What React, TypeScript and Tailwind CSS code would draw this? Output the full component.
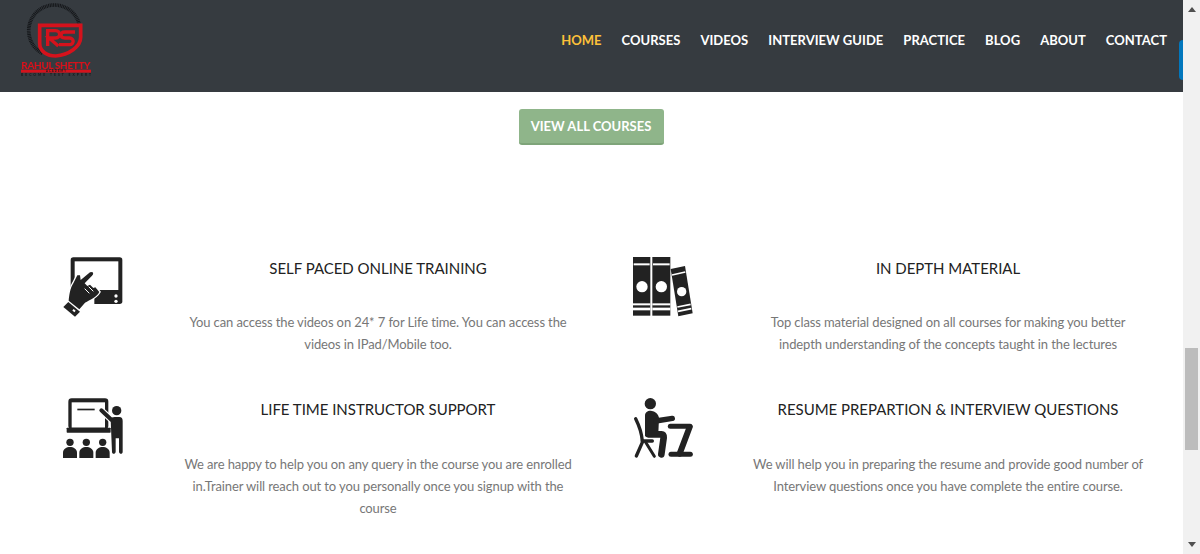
import React from "react";

const navItems = ["HOME", "COURSES", "VIDEOS", "INTERVIEW GUIDE", "PRACTICE", "BLOG", "ABOUT", "CONTACT"];

const Logo = () => (
  <svg width="76" height="80" viewBox="60 0 228 240" className="blur-[0.4px] self-start">
    <path d="M130 160 A77 77 0 1 1 240 70" fill="none" stroke="#15171a" strokeWidth="11" strokeDasharray="3 2" />
    <path
      d="M122 76 H245 V112 C245 140 210 165 170 168 C145 168 122 155 122 130 Z"
      fill="#363b40"
      stroke="#d5121c"
      strokeWidth="11"
    />
    <path d="M146 138 V92 H170 C186 92 186 114 170 114 H150 L178 138" fill="none" stroke="#d5121c" strokeWidth="10" />
    <path d="M228 96 H198 C182 96 182 114 198 114 H212 C226 114 226 134 212 134 H180" fill="none" stroke="#d5121c" strokeWidth="10" />
    <text x="171" y="208" textAnchor="middle" fontFamily="Lato, sans-serif" fontWeight="900" fontSize="30" fill="#d5121c" textLength="208">RAHUL SHETTY</text>
    <rect x="66" y="209" width="210" height="9" fill="#d5121c" />
    <text x="171" y="217" textAnchor="middle" fontFamily="Lato, sans-serif" fontWeight="700" fontSize="8" fill="#15171a" textLength="60">ACADEMY</text>
    <text x="171" y="228" textAnchor="middle" fontFamily="Lato, sans-serif" fontWeight="700" fontSize="10" fill="#15171a" textLength="210">BECOME TEST EXPERT</text>
  </svg>
);

const TouchIcon = () => (
  <svg width="70" height="70" viewBox="60 45 210 210">
    <rect x="92" y="52" width="155" height="140" rx="8" fill="#222" />
    <rect x="104" y="64" width="131" height="86" fill="#fff" />
    <rect x="85" y="150" width="78" height="50" fill="#fff" />
    <circle cx="228" cy="168" r="5" fill="#fff" />
    <circle cx="228" cy="184" r="5" fill="#fff" />
    <path
      d="M157 96 C161 100 160 104 156 107 L134 130 L142 138 L150 134 L160 144 L166 142 L178 156 C170 172 150 180 135 188 L118 208 L86 182 C88 165 90 145 100 130 L112 106 L120 106 L122 120 L150 97 Z"
      fill="#222"
      stroke="#fff"
      strokeWidth="8"
      paintOrder="stroke"
    />
    <path d="M134 146 L148 160 M146 140 L160 154" stroke="#fff" strokeWidth="3" />
    <path d="M70 201 L85 186 L120 215 L105 230 Z" fill="#222" />
    <rect x="98" y="209" width="8" height="6" fill="#fff" transform="rotate(40 102 212)" />
  </svg>
);

const BooksIcon = () => (
  <svg width="70" height="70" viewBox="45 30 210 210">
    <rect x="54" y="36" width="52" height="176" fill="#222" />
    <rect x="112" y="36" width="54" height="176" fill="#222" />
    <g fill="#fff">
      <rect x="56" y="55" width="48" height="6" />
      <rect x="114" y="55" width="50" height="6" />
      <rect x="54" y="175" width="52" height="6" />
      <rect x="54" y="188" width="52" height="8" />
      <rect x="112" y="175" width="54" height="6" />
      <rect x="112" y="188" width="54" height="8" />
      <circle cx="81" cy="125" r="17" />
      <circle cx="139" cy="125" r="17" />
    </g>
    <path d="M167 72 L210 63 L233 205 L190 214 Z" fill="#222" />
    <g stroke="#fff" strokeWidth="5">
      <path d="M171 90 L211 81" />
      <path d="M187 186 L227 178" />
      <path d="M189 199 L229 191" />
    </g>
    <circle cx="200" cy="140" r="14" fill="#fff" />
  </svg>
);

const TeacherIcon = () => (
  <svg width="70" height="70" viewBox="60 33 210 210">
    <rect x="85" y="40" width="120" height="92" rx="10" fill="#222" />
    <rect x="95" y="52" width="100" height="76" fill="#fff" />
    <rect x="80" y="128" width="132" height="15" rx="2" fill="#222" />
    <rect x="112" y="71" width="52" height="5" fill="#222" />
    <circle cx="230" cy="77" r="14" fill="#222" />
    <path d="M184 76 L214 104" stroke="#fff" strokeWidth="19" strokeLinecap="round" />
    <path d="M184 76 L214 104" stroke="#222" strokeWidth="12" strokeLinecap="round" />
    <path d="M212 104 C212 98 218 96 224 96 H238 C245 96 248 100 248 108 V200 C248 208 238 208 237 200 V160 H227 V200 C226 208 216 208 216 200 Z" fill="#222" />
    {[90, 139, 188].map((x) => (
      <g key={x} fill="#222">
        <circle cx={x} cy="172" r="11" />
        <path d={`M${x - 21} 219 V203 C${x - 21} 192 ${x - 10} 186 ${x} 186 C${x + 10} 186 ${x + 21} 192 ${x + 21} 203 V219 Z`} />
      </g>
    ))}
  </svg>
);

const StudentIcon = () => (
  <svg width="70" height="70" viewBox="45 33 210 210">
    <circle cx="106" cy="56" r="17" fill="#222" />
    <path d="M90 92 C90 82 100 76 110 78 C122 80 130 88 132 98 L130 145 L90 154 Z" fill="#222" />
    <path d="M122 108 L172 100" stroke="#222" strokeWidth="16" strokeLinecap="round" />
    <path d="M100 148 H140 C146 148 146 152 146 158 L139 208" fill="none" stroke="#222" strokeWidth="20" strokeLinecap="round" strokeLinejoin="round" />
    <g fill="none" stroke="#222" strokeLinecap="round">
      <path d="M62 101 C74 125 80 145 82 168" strokeWidth="10" />
      <path d="M82 168 H112" strokeWidth="10" />
      <path d="M82 172 L64 213" strokeWidth="10" />
      <path d="M92 172 L118 214" strokeWidth="9" />
      <path d="M166 124 H225" strokeWidth="15" />
      <path d="M224 126 L194 206" strokeWidth="18" />
      <path d="M168 208 H226" strokeWidth="15" />
    </g>
  </svg>
);

type Feature = { icon: React.ReactNode; title: string; lines: string[] };

const rows: Feature[][] = [
  [
    {
      icon: <TouchIcon />,
      title: "SELF PACED ONLINE TRAINING",
      lines: ["You can access the videos on 24* 7 for Life time. You can access the", "videos in IPad/Mobile too."],
    },
    {
      icon: <BooksIcon />,
      title: "IN DEPTH MATERIAL",
      lines: ["Top class material designed on all courses for making you better", "indepth understanding of the concepts taught in the lectures"],
    },
  ],
  [
    {
      icon: <TeacherIcon />,
      title: "LIFE TIME INSTRUCTOR SUPPORT",
      lines: ["We are happy to help you on any query in the course you are enrolled", "in.Trainer will reach out to you personally once you signup with the", "course"],
    },
    {
      icon: <StudentIcon />,
      title: "RESUME PREPARTION & INTERVIEW QUESTIONS",
      lines: ["We will help you in preparing the resume and provide good number of", "Interview questions once you have complete the entire course."],
    },
  ],
];

const FeatureCard = ({ icon, title, lines, second }: Feature & { second: boolean }) => (
  <div className="flex w-[570px]">
    <div className="w-[157px] pl-[39px] shrink-0">{icon}</div>
    <div className="w-[400px] shrink-0 text-center">
      <h4 className="text-[15px] tracking-[-0.03px] leading-[22px] mt-[2px] text-[#222]">{title}</h4>
      <p className={`${second ? "mt-[33px]" : "mt-[32px]"} text-[13px] tracking-[-0.11px] leading-[22px] text-[#777]`}>
        {lines.map((l) => (
          <span key={l} className="block whitespace-nowrap">{l}</span>
        ))}
      </p>
    </div>
  </div>
);

const Scrollbar = () => (
  <div className="w-[17px] h-full bg-[#f1f1f1] flex flex-col items-center shrink-0">
    <svg width="8" height="5" viewBox="0 0 8 5" className="mt-[7px]">
      <path d="M4 0 L8 5 H0 Z" fill="#505050" />
    </svg>
    <div className="w-[13px] h-[102px] mt-[336px] bg-[#bcbcbc]" />
    <svg width="8" height="5" viewBox="0 0 8 5" className="mt-[92px]">
      <path d="M4 5 L8 0 H0 Z" fill="#505050" />
    </svg>
  </div>
);

export default function App() {
  return (
    <div className="flex h-[554px] w-[1200px] overflow-hidden bg-white font-['Lato',sans-serif]">
      <div className="flex-1 min-w-0 relative">
        <header className="h-[92px] bg-[#363b40] flex items-center justify-between pl-[19px] pr-[16px]">
          <Logo />
          <nav className="flex gap-[20px] mb-[11px] text-[13px] tracking-[0.03px] font-bold text-white">
            {navItems.map((item) => (
              <a key={item} className={item === "HOME" ? "text-[#fdc13a]" : ""}>{item}</a>
            ))}
          </nav>
        </header>
        <div className="absolute right-0 top-[40px] w-[4px] h-[40px] rounded-l bg-[#0277bd]" />

        <div className="flex justify-center pt-[17px] pr-[1px]">
          <button className="w-[145px] h-[36px] pt-[2px] rounded-[3px] bg-[#8fb58a] border-b-2 border-[#7ea479] text-[13px] font-bold text-white">
            VIEW ALL COURSES
          </button>
        </div>

        <div className="pl-[21px] pt-[110px] flex flex-col gap-[41px]">
          {rows.map((row, i) => (
            <div key={i} className="flex">
              {row.map((f) => (
                <FeatureCard key={f.title} {...f} second={i === 1} />
              ))}
            </div>
          ))}
        </div>
      </div>
      <Scrollbar />
    </div>
  );
}
